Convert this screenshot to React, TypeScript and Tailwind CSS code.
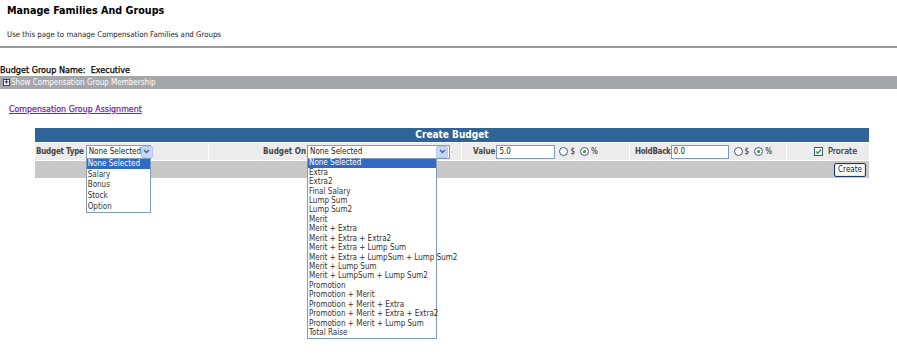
import React from 'react';

// Options for the open select lists
const budgetTypes = ['None Selected', 'Salary', 'Bonus', 'Stock', 'Option'];
const budgetOn = [
  'None Selected',
  'Extra',
  'Extra2',
  'Final Salary',
  'Lump Sum',
  'Lump Sum2',
  'Merit',
  'Merit + Extra',
  'Merit + Extra + Extra2',
  'Merit + Extra + Lump Sum',
  'Merit + Extra + LumpSum + Lump Sum2',
  'Merit + Lump Sum',
  'Merit + LumpSum + Lump Sum2',
  'Promotion',
  'Promotion + Merit',
  'Promotion + Merit + Extra',
  'Promotion + Merit + Extra + Extra2',
  'Promotion + Merit + Lump Sum',
  'Total Raise',
];

const Arrow: React.FC = () => (
  <span className="flex h-[12px] w-[12px] shrink-0 items-center justify-center rounded-[2px] border border-[#b4c8ec] bg-[#c6d6f4]">
    <svg width="7" height="5" viewBox="0 0 7 5">
      <path d="M1 1 L3.5 3.5 L6 1" fill="none" stroke="#4d6185" strokeWidth="1.4" />
    </svg>
  </span>
);

// Select box with an open list hanging below it
const OpenSelect: React.FC<{
  width: string;
  listWidth: string;
  itemHeight: string;
  options: string[];
}> = ({ width, listWidth, itemHeight, options }) => (
  <div className={`relative shrink-0 ${width}`}>
    <div className="flex h-[14px] items-center justify-between border border-[#7f9db9] bg-white pl-[2px] pr-[1px]">
      <span className="whitespace-nowrap">None Selected</span>
      <Arrow />
    </div>
    <ul className={`absolute left-0 top-[13px] z-10 border border-[#7f9db9] bg-white ${listWidth}`}>
      {options.map((o, i) => (
        <li
          key={o}
          className={`${itemHeight} flex items-center whitespace-nowrap pl-[1px] ${
            i === 0 ? 'bg-[#316ac5] text-white' : 'text-[#333]'
          }`}
        >
          {o}
        </li>
      ))}
    </ul>
  </div>
);

const Radio: React.FC<{ checked?: boolean; label: string }> = ({ checked, label }) => (
  <span className="flex items-center gap-[2px]">
    <span className="flex h-[9px] w-[9px] items-center justify-center rounded-full border border-[#3d5a86] bg-white">
      {checked && <span className="h-[3px] w-[3px] rounded-full bg-[#21a121]" />}
    </span>
    <span>{label}</span>
  </span>
);

export default function App() {
  return (
    <div className="relative h-[354px] w-[897px] overflow-hidden bg-white font-['DejaVu_Sans_Condensed','DejaVu_Sans',sans-serif] font-stretch-condensed text-[8px] text-[#222]">
      {/* Page header */}
      <h1 className="h-[22px] whitespace-nowrap pl-[7px] text-[10.7px] font-bold leading-[22px] text-black">
        Manage Families And Groups
      </h1>
      <p className="mt-[6px] h-[14px] whitespace-nowrap pl-[7px] text-[7.8px] leading-[14px]">
        Use this page to manage Compensation Families and Groups
      </p>
      <div className="mt-[4px] border-t-2 border-[#9a9a9a]" />

      {/* Group info */}
      <div className="mt-[16px] h-[12px] whitespace-nowrap text-[9px] leading-[12px] text-black [-webkit-text-stroke:0.25px_black]">
        Budget Group Name:&nbsp; Executive
      </div>
      <div className="flex h-[13px] items-center gap-[1px] bg-[#a5a6aa] pl-[3px] text-white">
        <span className="flex h-[7px] w-[7px] items-center justify-center border border-[#444] bg-white text-[7px] font-bold leading-none text-black">
          +
        </span>
        <span className="whitespace-nowrap">Show Compensation Group Membership</span>
      </div>

      <div className="mt-[13px] h-[14px] pl-[9px] leading-[14px]">
        <a className="whitespace-nowrap text-[8.8px] text-[#7d1fa8] underline [-webkit-text-stroke:0.25px_#7d1fa8]">
          Compensation Group Assignment
        </a>
      </div>

      {/* Create Budget table */}
      <div className="ml-[35px] mt-[12px] w-[834px]">
        <div className="h-[14px] bg-[#2f6596] text-center text-[10px] font-bold leading-[14px] text-white">
          Create Budget
        </div>
        <div className="mt-px flex h-[17px] items-center bg-[#ececec]">
          <div className="flex h-full w-[174px] items-center gap-[2px] border-r border-white pl-px">
            <span className="whitespace-nowrap font-bold tracking-[-0.25px] text-[#444]">Budget Type</span>
            <OpenSelect width="w-[65px]" listWidth="w-[65px]" itemHeight="h-[10.7px]" options={budgetTypes} />
          </div>
          <div className="flex h-full w-[253px] items-center justify-end gap-[1px] border-r border-white pr-[11px]">
            <span className="whitespace-nowrap font-bold text-[#444]">Budget On</span>
            <OpenSelect width="w-[143px]" listWidth="w-[130px]" itemHeight="h-[9.45px]" options={budgetOn} />
          </div>
          <div className="flex h-full w-[168px] items-center border-r border-white pl-[11px]">
            <span className="font-bold text-[#444]">Value</span>
            <span className="ml-px flex h-[14px] w-[59px] items-center border border-[#7f9db9] bg-white pl-[2px]">5.0</span>
            <span className="ml-[4px] flex items-center gap-[5px]">
              <Radio label="$" />
              <Radio checked label="%" />
            </span>
          </div>
          <div className="flex h-full w-[157px] items-center border-r border-white pl-[5px]">
            <span className="font-bold tracking-[-0.3px] text-[#444]">HoldBack</span>
            <span className="flex h-[14px] w-[58px] items-center border border-[#7f9db9] bg-white pl-[2px]">0.0</span>
            <span className="ml-[5px] flex items-center gap-[5px]">
              <Radio label="$" />
              <Radio checked label="%" />
            </span>
          </div>
          <div className="flex h-full flex-1 items-center gap-[5px] pl-[27px]">
            <span className="flex h-[9px] w-[9px] items-center justify-center border border-[#3d5a86] bg-white">
              <svg width="7" height="7" viewBox="0 0 7 7">
                <path d="M1 3.5 L2.8 5.3 L6 1.5" fill="none" stroke="#21a121" strokeWidth="1.4" />
              </svg>
            </span>
            <span className="text-[9px] text-[#333] [-webkit-text-stroke:0.2px_#333]">Prorate</span>
          </div>
        </div>
        <div className="mt-px flex h-[17px] items-center justify-end bg-[#c8c8c8] pr-[3px]">
          <button className="h-[14px] rounded-[2px] border border-[#1c3a66] bg-white px-[3px] text-[8px] leading-none text-[#222] shadow-[inset_0_0_0_1px_#dfe6f0]">
            Create
          </button>
        </div>
      </div>
    </div>
  );
}
